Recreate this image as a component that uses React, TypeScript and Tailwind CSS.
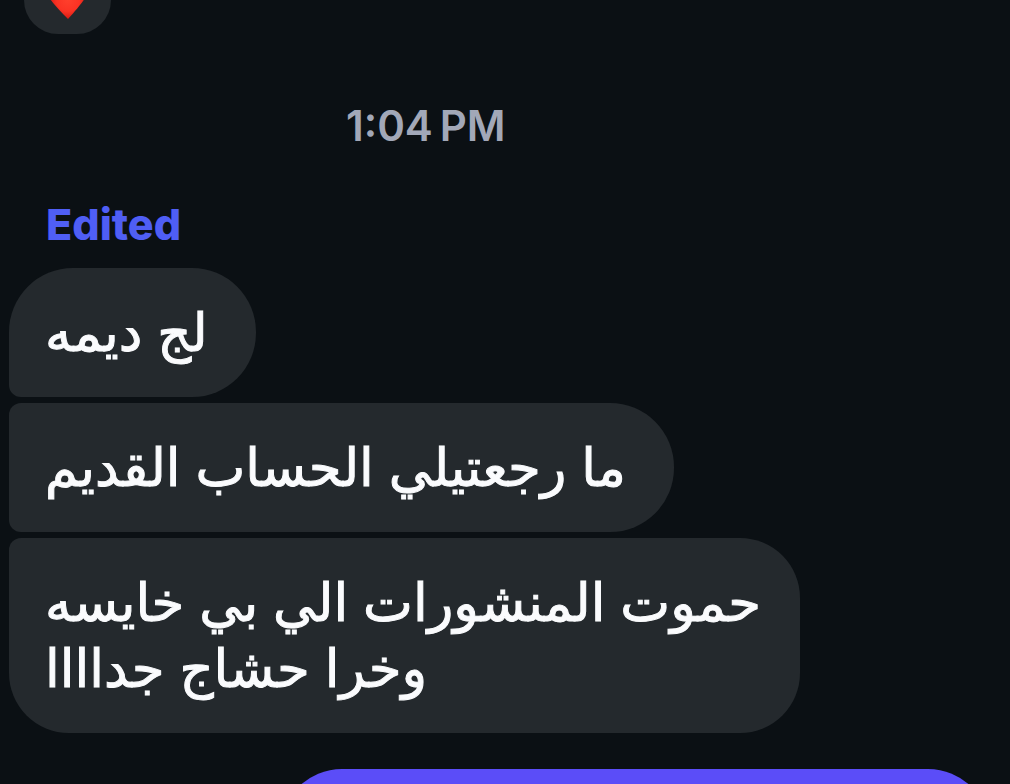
type Message = {
  text: string;
  size: string;
  corners: string;
};

const messages: Message[] = [
  {
    text: "لج ديمه",
    size: "w-fit pr-12",
    corners: "rounded-[64px] rounded-bl-xl",
  },
  {
    text: "ما رجعتيلي الحساب القديم",
    size: "w-fit pr-12",
    corners: "rounded-r-[64px] rounded-l-xl",
  },
  {
    text: "حموت المنشورات الي بي خايسه وخرا حشاج جداااا",
    size: "w-[79%] pr-9",
    corners: "rounded-[60px] rounded-tl-xl",
  },
];

function Bubble({ text, size, corners }: Message) {
  return (
    <li
      dir="rtl"
      className={`${size} ${corners} bg-[#24292d] pt-[31px] pb-8 pl-9 text-left text-[53px] leading-[66px] text-[#fafbfd] [-webkit-text-stroke:1px_#fafbfd]`}
    >
      {text}
    </li>
  );
}

function Reaction() {
  return (
    <div className="ml-6 flex h-[34px] w-[87px] shrink-0 items-end justify-center rounded-b-[40px] bg-[#24292d]">
      <svg viewBox="0 0 40 34" className="h-[34px] w-10" role="img" aria-label="Heart">
        <defs>
          <radialGradient id="heart" gradientUnits="userSpaceOnUse" cx="20" cy="0" r="19">
            <stop offset="0" stopColor="#ff3f2c" />
            <stop offset="0.6" stopColor="#fb3324" />
            <stop offset="1" stopColor="#d81a12" />
          </radialGradient>
        </defs>
        <path d="M-1 -6H39C38 -2 30 8 20 19C9 8 2 0 -1 -6Z" fill="url(#heart)" />
      </svg>
    </div>
  );
}

export default function App() {
  return (
    <main className="flex h-screen flex-col overflow-hidden bg-[#0b1014] font-['Inter','DejaVu_Sans',sans-serif]">
      <Reaction />

      <time className="mt-16 ml-[346px] text-[42px] leading-[56px] font-semibold text-[#a2a8b8]">
        {"1:04\u202fPM"}
      </time>

      <p className="mt-10 ml-[46px] text-[43px] leading-[60px] font-extrabold text-[#4f5ef5]">
        Edited
      </p>

      <ul className="mt-[14px] ml-[9px] flex flex-col items-start gap-[6px]">
        {messages.map((message) => (
          <Bubble key={message.text} {...message} />
        ))}
      </ul>

      <div className="mt-9 mr-5 ml-[280px] h-32 shrink-0 rounded-[62px] bg-[#5b4df8]" />
    </main>
  );
}
